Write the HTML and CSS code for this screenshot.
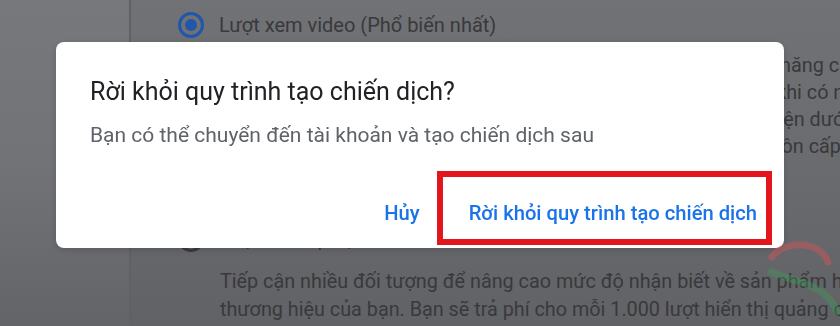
FILE: index.html
```html
<!DOCTYPE html>
<html lang="vi">
<head>
<meta charset="utf-8">
<title>Rời khỏi quy trình tạo chiến dịch?</title>
<link rel="stylesheet" href="styles.css">
</head>
<body>
<div class="page">
  <aside class="sidebar"></aside>
  <main class="content">
    <div class="option">
      <span class="radio checked"></span>
      <span class="label">Lượt xem video (Phổ biến nhất)</span>
    </div>
    <div class="desc desc-1">
      <div class="line">Khuyến khích mọi người xem và tương tác với video hơn, có khả năng cao</div>
      <div class="line">Quảng cáo của bạn sẽ hiển thị cho những người xem video như khi có nguồn</div>
      <div class="line">Bạn sẽ trả tiền cho mỗi lượt xem video đáp ứng được các điều kiện dưới đây</div>
      <div class="line">Sử dụng chiến lược giá thầu CPV tối đa cùng ngân sách đủ để luôn cấp</div>
    </div>
    <div class="option option-2">
      <span class="radio"></span>
      <span class="label">Phạm vi tiếp cận</span>
    </div>
    <div class="desc desc-2">
      <div class="line">Tiếp cận nhiều đối tượng để nâng cao mức độ nhận biết về sản phẩm hoặc</div>
      <div class="line">thương hiệu của bạn. Bạn sẽ trả phí cho mỗi 1.000 lượt hiển thị quảng cáo</div>
    </div>
  </main>
</div>

<div class="scrim">
  <div class="dialog" role="dialog">
    <h2 class="title">Rời khỏi quy trình tạo chiến dịch?</h2>
    <p class="body">Bạn có thể chuyển đến tài khoản và tạo chiến dịch sau</p>
    <div class="actions">
      <button class="btn">Hủy</button>
      <button class="btn primary">Rời khỏi quy trình tạo chiến dịch<span class="highlight"></span></button>
    </div>
  </div>
</div>

<svg class="watermark" width="75" height="86" viewBox="0 0 75 86">
  <path d="M7 19 C 20 2, 55 2, 63 24" fill="none" stroke="#c9565a" stroke-width="7" stroke-linecap="round" opacity="0.5"/>
  <path d="M6 34 C 30 44, 62 46, 72 74" fill="none" stroke="#3f9a5a" stroke-width="7" stroke-linecap="round" opacity="0.4"/>
</svg>
</body>
</html>
```
FILE: styles.css
```css
* { box-sizing: border-box; }

html, body {
  margin: 0;
  padding: 0;
}

body {
  width: 840px;
  height: 326px;
  overflow: hidden;
  font-family: Roboto, "Liberation Sans", Arial, sans-serif;
  position: relative;
}

.page {
  display: flex;
  height: 326px;
  background: linear-gradient(180deg, #717275 0%, #6b6c6f 45%, #616265 100%);
}

.sidebar {
  width: 131px;
  flex: none;
  border-right: 2px solid #606164;
  background: linear-gradient(180deg, #77787b 0%, #727376 50%, #636467 100%);
}

.content {
  flex: 1;
  padding-left: 47px;
  padding-top: 12px;
  color: #38393c;
  overflow: hidden;
}

.option {
  display: flex;
  align-items: center;
  gap: 15px;
  height: 26px;
}

.radio {
  width: 26px;
  height: 26px;
  flex: none;
  border-radius: 50%;
  border: 3px solid #3a3b3e;
  display: flex;
  align-items: center;
  justify-content: center;
}

.radio.checked {
  border-color: #1f58ab;
}

.radio.checked::after {
  content: "";
  width: 12px;
  height: 12px;
  border-radius: 50%;
  background: #1f58ab;
}

.label {
  font-size: 20px;
  white-space: nowrap;
}

.desc {
  margin-left: 42px;
  font-size: 19.8px;
  line-height: 27px;
  white-space: nowrap;
}

.desc-1 { margin-top: 14px; }

.option-2 { margin-top: 66px; }

.desc-2 {
  margin-top: 16px;
  line-height: 28px;
}

.scrim {
  position: fixed;
  inset: 0;
  padding: 42px 0 0 56px;
}

.dialog {
  width: 728px;
  height: 206px;
  background: #ffffff;
  border-radius: 8px;
  padding: 34px 27px 0 34px;
  box-shadow: 0 2px 6px rgba(0, 0, 0, 0.15);
}

.title {
  margin: 0;
  font-size: 25px;
  line-height: 32px;
  font-weight: 400;
  color: #202124;
}

.body {
  margin: 15px 0 0;
  font-size: 21px;
  line-height: 24px;
  color: #5f6368;
}

.actions {
  margin-top: 54px;
  display: flex;
  justify-content: flex-end;
  gap: 49px;
}

.btn {
  border: 0;
  background: none;
  padding: 0;
  font-family: Roboto, "Liberation Sans", Arial, sans-serif;
  font-size: 20.2px;
  line-height: 24px;
  font-weight: 500;
  color: #1a73e8;
  cursor: pointer;
}

.primary {
  position: relative;
}

.highlight {
  position: absolute;
  left: -32px;
  right: -15px;
  top: -30px;
  bottom: -20px;
  border: 6px solid #e3161d;
  pointer-events: none;
}

.watermark {
  position: absolute;
  left: 765px;
  top: 238px;
}
```
